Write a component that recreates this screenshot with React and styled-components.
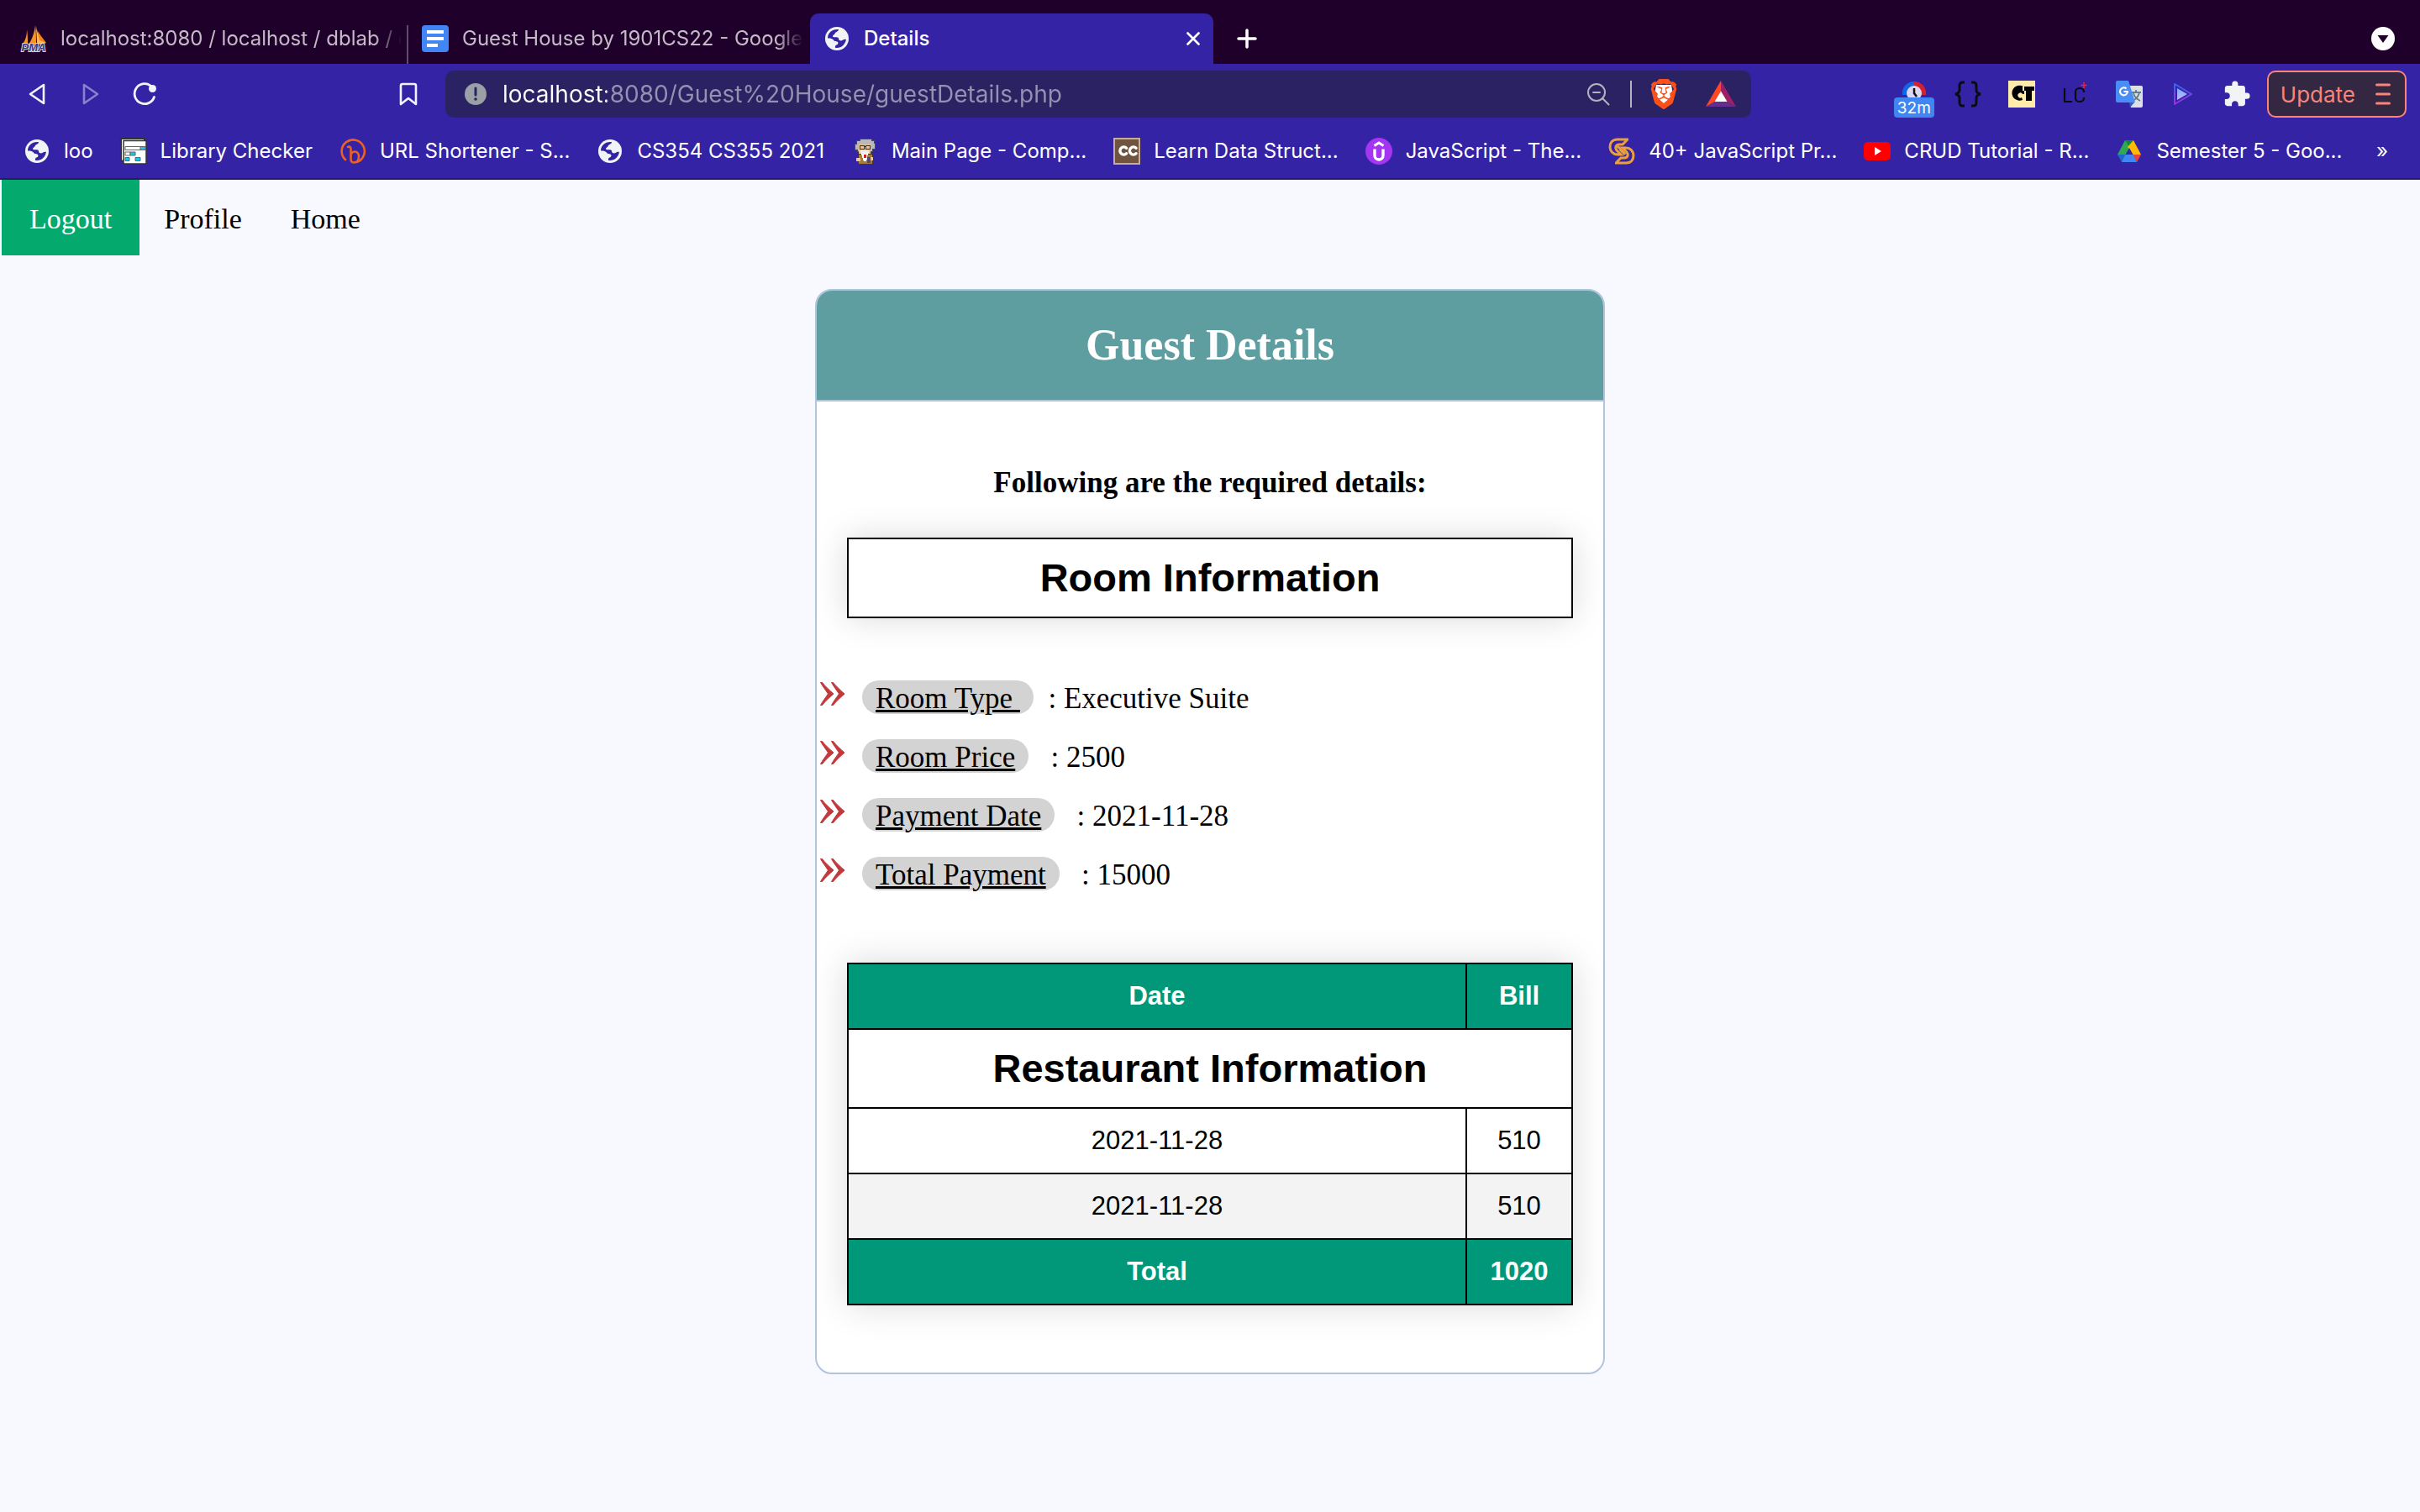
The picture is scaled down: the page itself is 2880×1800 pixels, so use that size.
import React from "react";
import styled, { createGlobalStyle, css } from "styled-components";
import { MdExtension } from "react-icons/md";
import { SiBrave } from "react-icons/si";

const serif = '"Liberation Serif", "Times New Roman", serif';
const sans = '"Liberation Sans", Arial, sans-serif';
const ui = 'Inter, "Noto Sans", sans-serif';

const GlobalStyle = createGlobalStyle`
  *, *::before, *::after { box-sizing: border-box; }
  html, body { margin: 0; min-height: 100%; background: #f8f8ff; }
  body { font-family: ${serif}; color: #000; }
  svg { display: block; flex: none; }
  button { font: inherit; color: inherit; border: 0; background: none; padding: 0; margin: 0; cursor: pointer; }
`;

/* ---------- browser frame ---------- */

const Browser = styled.header`
  font-family: ${ui};
  background: #3523a5;
  border-bottom: 2px solid #24186f;
`;

const TabStrip = styled.div`
  display: flex;
  align-items: flex-end;
  height: 76px;
  padding: 0 30px 0 8px;
  background: #1f002a;
`;

const Tab = styled.div`
  display: flex;
  align-items: center;
  gap: 16px;
  flex: 0 1 480px;
  min-width: 0;
  height: 60px;
  padding: 0 16px;
  color: #c4bac8;
  ${(p) =>
    p.$divided &&
    css`
      flex-basis: 478px;
      padding-right: 4px;
    `}
  ${(p) =>
    p.$rule &&
    css`
      background: linear-gradient(#5f4c68, #5f4c68) right bottom / 2px 46px no-repeat;
    `}
  ${(p) =>
    p.$active &&
    css`
      background: #3523a5;
      color: #fff;
      border-radius: 10px 10px 0 0;
    `}
`;

const TabTitle = styled.span`
  flex: 1;
  min-width: 0;
  overflow: hidden;
  white-space: nowrap;
  font-size: 24px;
  line-height: 32px;
  font-weight: ${(p) => (p.$active ? 500 : 400)};
  ${(p) =>
    !p.$active &&
    css`
      mask-image: linear-gradient(to left, transparent 4px, #000 36px);
    `}
`;

const StripButton = styled.button`
  display: grid;
  place-items: center;
  height: 60px;
  width: ${(p) => p.$width};
  padding-bottom: 1px;
  margin-left: ${(p) => (p.$end ? "auto" : "28px")};
`;

const CloseButton = styled.button`
  display: grid;
  place-items: center;
  width: 16px;
  height: 32px;
`;

const Toolbar = styled.div`
  display: flex;
  align-items: center;
  height: 72px;
  padding: 0 16px 0 12px;
`;

const NavButton = styled.button`
  display: grid;
  place-items: center;
  width: 64px;
  height: 56px;
  color: #f4f2fb;
  opacity: ${(p) => (p.disabled ? 0.45 : 1)};
  margin-left: ${(p) => (p.$push ? "250px" : "0")};
`;

const AddressBar = styled.form`
  display: flex;
  align-items: center;
  flex: 1;
  min-width: 0;
  height: 56px;
  margin: 0 162px 0 12px;
  padding: 0 18px 0 23px;
  background: #2b2263;
  border-radius: 10px;
`;

const AddressInput = styled.input`
  flex: 1;
  min-width: 0;
  height: 56px;
  margin-left: 19px;
  padding: 0;
  border: 0;
  outline: 0;
  font-family: ${ui};
  font-size: 28px;
  color: #9691b1;
  background: linear-gradient(90deg, #fff 124px, #9691b1 124px);
  background-clip: text;
  -webkit-text-fill-color: transparent;
`;

const AddressRule = styled.span`
  width: 2px;
  height: 32px;
  margin: 0 22px 0 24px;
  background: #b4b1c4;
`;

const AddressButton = styled.button`
  margin-left: ${(p) => (p.$spaced ? "34px" : "0")};
`;

const Extension = styled.button`
  position: relative;
  display: grid;
  place-items: center;
  width: 64px;
  height: 56px;
`;

const TimeBadge = styled.span`
  position: absolute;
  left: 8px;
  bottom: 0;
  width: 48px;
  height: 24px;
  border-radius: 4px;
  background: #3f86f3;
  color: #fff;
  font-size: 19px;
  line-height: 26px;
  text-align: center;
`;

const UpdateButton = styled.button`
  display: flex;
  align-items: center;
  gap: 24px;
  height: 56px;
  margin-left: 4px;
  padding: 0 17px 0 14px;
  border: 2px solid #fb8478;
  border-radius: 10px;
  background: #342741;
  color: #fb8478;
  font-size: 26px;
`;

const Bookmarks = styled.nav`
  display: flex;
  align-items: center;
  gap: 32px;
  height: 64px;
  padding: 0 38px 0 28px;
`;

const Bookmark = styled.a`
  display: flex;
  align-items: center;
  gap: 16px;
  color: #fff;
  text-decoration: none;
  white-space: nowrap;
  font-size: 24px;
  line-height: 32px;
`;

const MoreBookmarks = styled.button`
  margin-left: auto;
  color: #fff;
  font-size: 24px;
  line-height: 32px;
`;

/* ---------- page ---------- */

const TopNav = styled.nav`
  display: flex;
  padding-left: 2px;
`;

const TopLink = styled.a`
  padding: 27px ${(p) => (p.$active ? "33px" : "29px")} 23px;
  font-size: 34px;
  line-height: 40px;
  text-decoration: none;
  color: ${(p) => (p.$active ? "#fff" : "#000")};
  background: ${(p) => (p.$active ? "#04aa6d" : "transparent")};
`;

const Card = styled.main`
  width: 940px;
  max-width: 100%;
  margin: 40px auto;
  border: 2px solid #b0c4de;
  border-radius: 20px;
  background: #fff;
  overflow: hidden;
`;

const CardHeader = styled.div`
  padding: 35px 20px;
  border-bottom: 2px solid #b0c4de;
  background: #5f9ea0;
  color: #fff;
  text-align: center;

  h1 {
    margin: 0;
    font-size: 52px;
    line-height: 60px;
  }
`;

const CardBody = styled.div`
  padding: 77px 0 80px;
`;

const Lead = styled.p`
  margin: 0 0 45px;
  text-align: center;
  font-size: 35px;
  line-height: 40px;
  font-weight: 700;
`;

const panel = css`
  margin: 0 36px;
  box-shadow: 0 0 40px rgba(0, 0, 0, 0.15);
`;

const SectionTitle = styled.h2`
  ${panel}
  padding: 18px;
  border: 2px solid #000;
  font-family: ${sans};
  font-size: 47px;
  line-height: 56px;
  text-align: center;
`;

const Facts = styled.ul`
  display: grid;
  gap: 30px;
  margin: 74px 0 86px;
  padding: 0 0 0 4px;
  list-style: none;
`;

const Fact = styled.li`
  display: flex;
  height: 40px;
  font-size: 35px;
  line-height: 43px;
  white-space: pre;

  svg {
    margin: 2px 20px 0 0;
  }
`;

const FactName = styled.span`
  padding: 0 16px;
  border-radius: 20px;
  background: #d3d3d3;
  text-decoration: underline;
`;

const BillTable = styled.table`
  ${panel}
  width: calc(100% - 72px);
  border-collapse: collapse;
  table-layout: fixed;
  font-family: ${sans};
  font-size: 31px;
  line-height: 36px;
  text-align: center;

  th,
  td {
    padding: 20px 24px;
    border: 2px solid #000;
  }
  th:last-child:not([colspan]),
  td:last-child {
    width: 126px;
    padding: 20px 0;
  }
`;

const BillRow = styled.tr`
  background: ${(p) => (p.$solid ? "#009879" : p.$striped ? "#f3f3f3" : "#fff")};
  color: ${(p) => (p.$solid ? "#fff" : "#000")};
  font-weight: ${(p) => (p.$solid ? 700 : 400)};
`;

const BillCaption = styled.th`
  && {
    padding: 18px;
    font-size: 47px;
    line-height: 56px;
  }
`;

/* ---------- icons ---------- */

const Globe = ({ size = 32 }) => (
  <svg width={size} height={size} viewBox="-2 -2 32 32">
    <circle cx="14" cy="14" r="14" fill="#f1f3f4" />
    <path
      fill="#3523a5"
      d="M3 13.5C3 7.500 8 3 14 3c1 0 1.500 0 2 .2.300 2.300-3.500 2.300-4.500 4.800-.5 1.500-2.500 1.500-2.500 3.200 0 1.300 2 1 4 1 3 0 3 1 3.300 2.800.4 1.700 3 2 5 .5 1-.8 2.500-.8 3.600-.5C24 21 19.500 25 14 25c-.8 0-1.500 0-2-.2-.3-2.500.5-3 2-3.500 1.500-.600 1.800-2.300 1-3.300-1-1.200-2.800-.3-4-1.300-1.300-1-1.500-3.200-8-3.200Z"
    />
  </svg>
);

const Pma = () => (
  <svg width="32" height="32" viewBox="0 0 32 32" overflow="visible">
    <path fill="#f79320" d="M8 5C8 13 6 19 2 23h7C9 17 9 11 8 5ZM18 0c-1 9-4 17-8 23h9c0-8 0-15-1-23Z" />
    <path fill="#fbb667" d="M19 1c1 8 4 16 12 20-3 1-7 2-11 2 0-8-1-15-1-22Z" />
    <path fill="#f5840c" d="M20 6c3 4 7 10 11 15l-8-3Z" />
    <text x="16" y="31" textAnchor="middle" fontFamily="Liberation Sans" fontWeight="700" fontStyle="italic" fontSize="13" fill="#3c3b78" stroke="#d6d5e4" strokeWidth="2" paintOrder="stroke">PMA</text>
  </svg>
);

const Docs = () => (
  <svg width="32" height="32" viewBox="0 0 32 32">
    <rect width="32" height="32" rx="4" fill="#4285f4" />
    <path fill="#fff" d="M6 6h20v4H6zM6 14h20v4H6zM6 22h13v4H6z" />
  </svg>
);

const Checker = () => (
  <svg width="32" height="32" viewBox="0 0 32 32">
    <path d="M1 28V1h28v2" fill="#fff" stroke="#333" strokeWidth="2" />
    <path d="M4 3.500h27V31H4z" fill="#fff" stroke="#333" strokeWidth="1.500" />
    <g stroke="#666" fill="#fff">
      <path d="M6 10.500h24v4H6zM6 17h6v4H6z" />
      <path fill="#14c8ee" d="M24 10.500h6v4h-6zM12 17h6v4h-6zM6 23.500h5v4H6zM18 23.500h6v4h-6z" />
    </g>
  </svg>
);

const Bitly = () => (
  <svg width="32" height="32" viewBox="0 0 32 32" fill="none" stroke="#ee6123" strokeWidth="2.600" strokeLinecap="round">
    <path d="M7 26A13.600 13.600 0 1 1 21 28.800" />
    <path d="M10 11c2-1 3.500 0 3.500 2.500V25c0 3 1.500 4.500 3.700 4.500 3.600 0 5.800-3.300 5.800-7s-2-6-4.800-6c-2.700 0-4.700 2-4.700 5" />
  </svg>
);

const Professor = () => (
  <svg width="32" height="32" viewBox="0 0 32 32" shapeRendering="crispEdges">
    <path fill="#b9b9b9" stroke="#4b4b4b" d="M6 3h4V1h14v2h3v3h1v7h-3v3h-2v3H9v-3H7v-2H4V7h2z" />
    <path fill="#eac49c" d="M9 8h14v11H9z" />
    <path fill="none" stroke="#333" d="M10 9h5v4h-5zM17 9h5v4h-5zM15 10h2" />
    <path fill="#eee" d="M11 15h10v4H11z" />
    <path fill="#a67b3a" stroke="#49351c" d="M8 19h17v12H8z" />
    <path fill="#fff" d="M12 19h8l-2 9h-3z" />
    <path fill="#c22" d="M15 20h3v4h-3z" />
    <path fill="#eac49c" d="M6 24h5v4H6zM22 23h4v4h-4z" />
    <path fill="#4b4b78" d="M19 23h4v7h-4z" />
  </svg>
);

const Chef = () => (
  <svg width="32" height="32" viewBox="0 0 32 32">
    <rect x="1" y="1" width="30" height="30" fill="#6f5440" stroke="#c9ad98" strokeWidth="2" />
    <path d="M15.500 12.200a4.500 4.500 0 1 0 0 6.600M27 12.200a4.500 4.500 0 1 0 0 6.600" fill="none" stroke="#fff" strokeWidth="3.500" strokeLinecap="round" />
  </svg>
);

const Udemy = () => (
  <svg width="32" height="32" viewBox="0 0 32 32" fill="none" stroke="#fff">
    <circle cx="16" cy="16" r="16" fill="#a435f0" stroke="none" />
    <path d="M10.500 9.500 16 6l5.500 3.500" strokeWidth="3" />
    <path d="M11 13.500v7.500a5 5 0 0 0 10 0v-7.500" strokeWidth="3.400" />
  </svg>
);

const Scroll = () => (
  <svg width="32" height="32" viewBox="0 0 32 32" fill="none" stroke="#eb9f3d" strokeWidth="3">
    <path d="M24 2H11C4 2 2 7 2 11c0 5 4 9 9 9h4l-4-4c-4-4-2-8 2-8h4l5-5" />
    <path d="M8 30h13c7 0 9-5 9-9 0-5-4-9-9-9h-4l4 4c4 4 2 8-2 8h-4l-5 5" />
    <path d="m11 10 9 9M14 14l6 6" />
  </svg>
);

const YouTube = () => (
  <svg width="32" height="32" viewBox="0 0 32 32">
    <rect y="5" width="32" height="22" rx="5" fill="#f00" />
    <path d="m13 11 8 5-8 5z" fill="#fff" />
  </svg>
);

const Drive = () => (
  <svg width="32" height="32" viewBox="0 0 32 32">
    <path fill="#2da94f" d="M11 3h3l5 9L8 29 2 20z" />
    <path fill="#0f8a3c" d="M11 3h10l-5 8z" />
    <path fill="#ffba00" d="M21 3l9 17H20l-6-9z" />
    <path fill="#1f66d0" d="M2 20h10L7 29z" />
    <path fill="#ea4335" d="M20 20h10l-5 9z" />
    <path fill="#4285f4" d="M11.500 20h9L25 29H7z" />
    <path fill="#3523a5" d="m16 12 4.500 8h-9z" />
  </svg>
);

const Bat = () => (
  <svg width="36" height="32" viewBox="0 0 36 32">
    <path fill="#ff4724" d="M18 0v13l-7 12L0 31z" />
    <path fill="#9e1f63" d="M18 0v13l7 12 11 6z" />
    <path fill="#662d91" d="M0 31h36l-11-6H11z" />
    <path fill="#fff" d="m18 12.500 7.500 12.500h-15z" />
  </svg>
);

const BraveShield = () => (
  <svg width="32" height="36" viewBox="0 0 32 36">
    <path d="M7 7h18l2 12-11 11L5 18z" fill="#fff" />
    <SiBrave x="-2" y="0" size={36} color="#fb5019" />
  </svg>
);

const Timer = () => (
  <svg width="30" height="32" viewBox="0 0 30 32">
    <path d="M15 1a14 14 0 0 0-14 16h14z" fill="#1464e8" />
    <path d="M15 1a14 14 0 0 1 14 16H15z" fill="#d3212d" />
    <circle cx="15" cy="15" r="9" fill="#dcd8f2" />
    <path d="M15 9v6l3 4" stroke="#111" strokeWidth="2.500" fill="none" />
  </svg>
);

const Braces = () => (
  <svg width="32" height="32" viewBox="0 0 32 32" fill="none" stroke="#0b0b12" strokeWidth="3">
    <path d="M12 2H10C7 2 6 4 6 6v5c0 3-2 4.500-5 5 3 .5 5 2 5 5v5c0 3 1 4 4 4h2" />
    <path d="M20 2h2c3 0 4 2 4 4v5c0 3 2 4.500 5 5-3 .5-5 2-5 5v5c0 3-1 4-4 4h-2" />
  </svg>
);

const Ct = () => (
  <svg width="32" height="32" viewBox="0 0 32 32">
    <path fill="#ffecab" d="M0 0h32v32H0z" />
    <path d="M18 7A9 9 0 1 0 17 23l-1-3a3 3 0 1 1 1-4h2V7zM17 7h14v5h-3v12h-7V12h-4z" />
  </svg>
);

const Lc = () => (
  <svg width="32" height="32" viewBox="0 0 32 32" fill="none" stroke="#0b0b12" strokeWidth="2.200">
    <path d="M3 9v16h9M26 14v-1c0-2-2-4-5-4s-5 2-5 4v8c0 2 2 4 5 4s5-2 5-4v-1" />
    <path d="M26 2v7M22.500 5.500h7" stroke="#ff1e2d" strokeWidth="1.500" />
  </svg>
);

const Translate = () => (
  <svg width="32" height="32" viewBox="0 0 32 32">
    <path fill="#dcdfe3" d="M12 6h18a2 2 0 0 1 2 2v22a2 2 0 0 1-2 2H18z" />
    <path d="M19 14h11M24 11v3M28 14c-1 5-4 8-8 10M21 15c1 4 4 7 8 9" stroke="#607d8b" strokeWidth="1.800" fill="none" />
    <path fill="#2f5fc4" d="m16 26 6 0-5 6z" />
    <path fill="#4a8df6" d="M2 0h13l8 26H2a2 2 0 0 1-2-2V2a2 2 0 0 1 2-2Z" />
    <path d="M12.500 9.500A4.500 4.500 0 1 0 14 13H9.500" fill="none" stroke="#fff" strokeWidth="2" />
  </svg>
);

const Play = () => (
  <svg width="32" height="32" viewBox="0 0 32 32">
    <defs>
      <linearGradient id="playEdge" x1="0" y1="0" x2="0" y2="1">
        <stop offset="0" stopColor="#2f6bf0" />
        <stop offset="1" stopColor="#a52be2" />
      </linearGradient>
      <linearGradient id="playFill" x1="0" y1="0" x2="0" y2="1">
        <stop offset="0" stopColor="#6fb4ff" />
        <stop offset="1" stopColor="#c9b4fa" />
      </linearGradient>
    </defs>
    <path d="M6 4v24l20-12z" fill="none" stroke="url(#playEdge)" strokeWidth="2" strokeLinejoin="round" />
    <path d="M9 9v14l12-7z" fill="url(#playFill)" />
  </svg>
);

const Triangle = ({ flip }) => (
  <svg width="20" height="28" viewBox="0 0 20 28" fill="none" stroke="currentColor" strokeWidth="2.600" strokeLinejoin="round">
    <path d={flip ? "M2 3v22l16-11z" : "M18 3v22L2 14z"} />
  </svg>
);

const Reload = () => (
  <svg width="28" height="28" viewBox="0 0 28 28">
    <path d="M21 3.800A12 12 0 1 0 25.500 17.500" fill="none" stroke="currentColor" strokeWidth="2.800" strokeLinecap="round" />
    <circle cx="23.500" cy="7.500" r="4.500" fill="currentColor" />
  </svg>
);

const Ribbon = () => (
  <svg width="22" height="28" viewBox="0 0 22 28" fill="none" stroke="currentColor" strokeWidth="2.600" strokeLinejoin="round">
    <path d="M2 4a2 2 0 0 1 2-2h14a2 2 0 0 1 2 2v22l-9-7-9 7z" />
  </svg>
);

const Info = () => (
  <svg width="26" height="26" viewBox="0 0 26 26">
    <circle cx="13" cy="13" r="13" fill="#9aa0a6" />
    <path d="M13 6v8" stroke="#2b2263" strokeWidth="3" strokeLinecap="round" />
    <circle cx="13" cy="19" r="1.800" fill="#2b2263" />
  </svg>
);

const ZoomOut = () => (
  <svg width="28" height="28" viewBox="0 0 28 28" fill="none" stroke="#b4b1b8" strokeWidth="2" strokeLinecap="round">
    <circle cx="12" cy="12" r="10" />
    <path d="m19 19 7.500 7.500M8 12h8" />
  </svg>
);

const Chevrons = () => (
  <svg width="30" height="28" viewBox="0 0 30 28" fill="#c1393b" stroke="#c1393b" strokeLinejoin="round">
    <path d="M.5.500h2C6 5 11 9.500 16 14 11 18.500 6 23 2.500 27.500h-2C3 23 6.500 18.500 9.500 14 6.500 9.500 3 5 .5.500Z" />
    <path d="M13.500.500h2C19 5 24 9.500 29 14c-5 4.500-10 9-13.500 13.500h-2C16 23 19.500 18.500 22.500 14 19.500 9.500 16 5 13.500.500Z" />
  </svg>
);

/* ---------- data ---------- */

const bookmarks = [
  ["loo", Globe],
  ["Library Checker", Checker],
  ["URL Shortener - S...", Bitly],
  ["CS354 CS355 2021", Globe],
  ["Main Page - Comp...", Professor],
  ["Learn Data Struct...", Chef],
  ["JavaScript - The...", Udemy],
  ["40+ JavaScript Pr...", Scroll],
  ["CRUD Tutorial - R...", YouTube],
  ["Semester 5 - Goo...", Drive],
];

const extensions = [
  ["Timer", Timer, "32m"],
  ["JSON viewer", Braces],
  ["CT", Ct],
  ["LC", Lc],
  ["Translate", Translate],
  ["Player", Play],
];

const facts = [
  ["Room Type\u00a0", "\u00a0\u00a0: Executive Suite"],
  ["Room Price", "\u00a0\u00a0\u00a0: 2500"],
  ["Payment Date", "\u00a0\u00a0\u00a0: 2021-11-28"],
  ["Total Payment", "\u00a0\u00a0\u00a0: 15000"],
];

const bills = [
  ["2021-11-28", "510"],
  ["2021-11-28", "510"],
];

export default function App() {
  return (
    <>
      <GlobalStyle />
      <Browser>
        <TabStrip>
          <Tab $divided $rule>
            <Pma />
            <TabTitle>localhost:8080 / localhost / dblab / c</TabTitle>
          </Tab>
          <Tab $divided>
            <Docs />
            <TabTitle>Guest House by 1901CS22 - Google</TabTitle>
          </Tab>
          <Tab $active>
            <Globe />
            <TabTitle $active>Details</TabTitle>
            <CloseButton aria-label="Close tab">
              <svg width="16" height="16" viewBox="0 0 16 16" stroke="#fff" strokeWidth="2.600" strokeLinecap="round">
                <path d="m1.500 1.500 13 13M14.500 1.500l-13 13" />
              </svg>
            </CloseButton>
          </Tab>
          <StripButton $width="24px" aria-label="New tab">
            <svg width="24" height="24" viewBox="0 0 24 24" stroke="#fff" strokeWidth="3.500" strokeLinecap="round">
              <path d="M12 2v20M2 12h20" />
            </svg>
          </StripButton>
          <StripButton $width="28px" $end aria-label="Search tabs">
            <svg width="28" height="28" viewBox="0 0 28 28">
              <circle cx="14" cy="14" r="14" fill="#fff" />
              <path d="M7.500 10h13L14 19z" fill="#1f002a" />
            </svg>
          </StripButton>
        </TabStrip>

        <Toolbar>
          <NavButton aria-label="Back"><Triangle /></NavButton>
          <NavButton aria-label="Forward" disabled><Triangle flip /></NavButton>
          <NavButton aria-label="Reload"><Reload /></NavButton>
          <NavButton aria-label="Bookmark this page" $push><Ribbon /></NavButton>
          <AddressBar>
            <Info />
            <AddressInput aria-label="Address" defaultValue="localhost:8080/Guest%20House/guestDetails.php" />
            <AddressButton type="button" aria-label="Zoom out"><ZoomOut /></AddressButton>
            <AddressRule />
            <AddressButton type="button" aria-label="Shields"><BraveShield /></AddressButton>
            <AddressButton type="button" aria-label="Rewards" $spaced><Bat /></AddressButton>
          </AddressBar>
          {extensions.map(([name, Icon, badge]) => (
            <Extension key={name} aria-label={name}>
              <Icon />
              {badge && <TimeBadge>{badge}</TimeBadge>}
            </Extension>
          ))}
          <Extension aria-label="Extensions">
            <MdExtension size={34} color="#f1f3f4" />
          </Extension>
          <UpdateButton>
            Update
            <svg width="18" height="26" viewBox="0 0 18 26" stroke="currentColor" strokeWidth="3" strokeLinecap="round">
              <path d="M1.500 2h15M1.500 13h15M1.500 24h15" />
            </svg>
          </UpdateButton>
        </Toolbar>

        <Bookmarks aria-label="Bookmarks">
          {bookmarks.map(([name, Icon]) => (
            <Bookmark key={name} href="#">
              <Icon />
              {name}
            </Bookmark>
          ))}
          <MoreBookmarks>»</MoreBookmarks>
        </Bookmarks>
      </Browser>

      <TopNav>
        <TopLink href="#" $active>Logout</TopLink>
        <TopLink href="#">Profile</TopLink>
        <TopLink href="#">Home</TopLink>
      </TopNav>

      <Card>
        <CardHeader>
          <h1>Guest Details</h1>
        </CardHeader>
        <CardBody>
          <Lead>Following are the required details:</Lead>
          <SectionTitle>Room Information</SectionTitle>
          <Facts>
            {facts.map(([name, value]) => (
              <Fact key={name}>
                <Chevrons />
                <FactName>{name}</FactName>
                {value}
              </Fact>
            ))}
          </Facts>
          <BillTable>
            <thead>
              <BillRow $solid>
                <th>Date</th>
                <th>Bill</th>
              </BillRow>
            </thead>
            <tbody>
              <BillRow>
                <BillCaption colSpan={2}>Restaurant Information</BillCaption>
              </BillRow>
              {bills.map(([date, bill], i) => (
                <BillRow key={i} $striped={i % 2 === 1}>
                  <td>{date}</td>
                  <td>{bill}</td>
                </BillRow>
              ))}
            </tbody>
            <tfoot>
              <BillRow $solid>
                <td>Total</td>
                <td>1020</td>
              </BillRow>
            </tfoot>
          </BillTable>
        </CardBody>
      </Card>
    </>
  );
}
